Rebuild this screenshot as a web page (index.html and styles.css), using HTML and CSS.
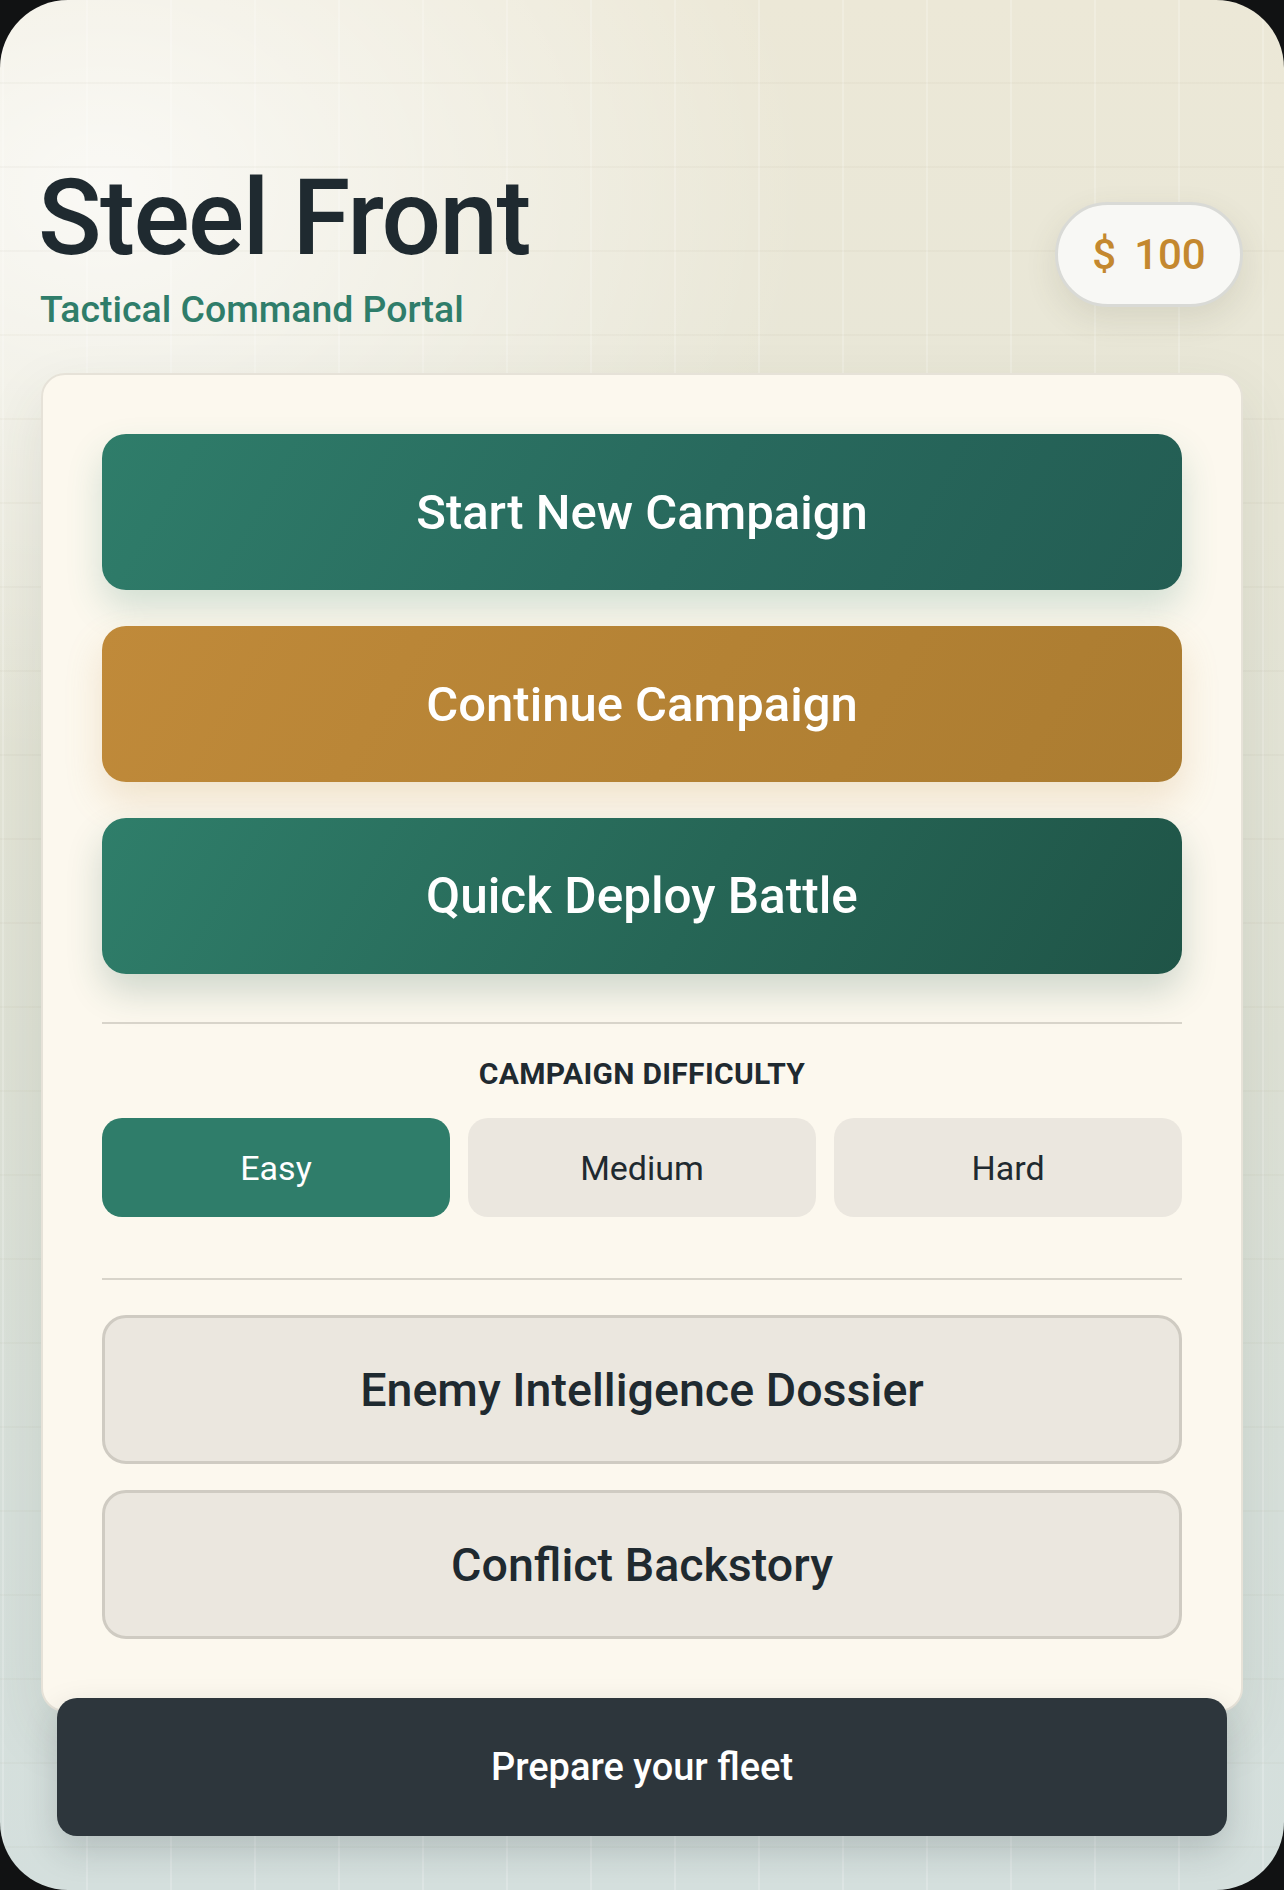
FILE: index.html
```html
<!DOCTYPE html>
<html lang="en">
<head>
<meta charset="utf-8">
<title>Steel Front</title>
<link rel="stylesheet" href="styles.css">
</head>
<body>
<div class="screen">
  <header class="top">
    <div class="brand">
      <h1 class="title">Steel Front</h1>
      <p class="subtitle">Tactical Command Portal</p>
    </div>
    <div class="badge"><span class="badge-sign">$</span><span class="badge-value">100</span></div>
  </header>

  <main class="card">
    <button class="btn btn-primary">Start New Campaign</button>
    <button class="btn btn-gold">Continue Campaign</button>
    <button class="btn btn-deep">Quick Deploy Battle</button>

    <div class="rule rule-first"></div>

    <section class="difficulty">
      <h2 class="label">CAMPAIGN DIFFICULTY</h2>
      <div class="segments">
        <button class="seg seg-on">Easy</button>
        <button class="seg">Medium</button>
        <button class="seg">Hard</button>
      </div>
    </section>

    <div class="rule rule-second"></div>

    <div class="links">
      <button class="outline">Enemy Intelligence Dossier</button>
      <button class="outline">Conflict Backstory</button>
    </div>
  </main>

  <div class="action-bar">Prepare your fleet</div>
</div>
</body>
</html>
```

FILE: styles.css
```css
* { box-sizing: border-box; }

html, body {
  margin: 0;
  padding: 0;
  background: #111213;
}

body {
  font-family: Roboto, "Liberation Sans", Arial, sans-serif;
  color: #1f2a30;
}

.screen {
  position: relative;
  width: 1284px;
  height: 1890px;
  border-radius: 68px;
  overflow: hidden;
  padding: 0 41px;
  background-color: #e4e4d6;
  background-image:
    linear-gradient(rgba(150, 140, 110, 0.05) 2px, transparent 2px),
    linear-gradient(90deg, rgba(255, 255, 255, 0.2) 2px, transparent 2px),
    radial-gradient(ellipse 55% 30% at 8% 10%, rgba(255, 255, 255, 0.75), rgba(255, 255, 255, 0) 100%),
    linear-gradient(180deg, #ece8d7 0%, #e7e6d7 28%, #dee1d5 55%, #d7e0db 80%, #d4dfdd 100%);
  background-size: 84px 84px, 84px 84px, 100% 100%, 100% 100%;
  background-position: 0 82px, 2px 0, 0 0, 0 0;
}

/* header */
.top {
  display: flex;
  justify-content: space-between;
  align-items: center;
  padding-top: 167px;
}

.title {
  margin: 0 0 0 -3px;
  font-size: 105px;
  line-height: 104px;
  font-weight: 500;
  letter-spacing: -0.015em;
  color: #1f2a30;
}

.subtitle {
  margin: 15px 0 0 -1px;
  font-size: 37.4px;
  line-height: 46px;
  font-weight: 500;
  color: #2f7d6a;
}

.badge {
  margin-top: 10px;
  width: 188px;
  height: 105px;
  border-radius: 53px;
  background: #f8f8f5;
  border: 3px solid #d9dad6;
  box-shadow: 0 12px 32px rgba(80, 80, 60, 0.12);
  display: flex;
  align-items: center;
  justify-content: center;
  gap: 18px;
  color: #c4882f;
  font-size: 42px;
  font-weight: 500;
}

/* card */
.card {
  margin-top: 41px;
  background: #fcf8ee;
  border: 2px solid #e6e2d8;
  border-radius: 24px;
  padding: 59px 59px 71px;
  box-shadow: 0 24px 60px rgba(60, 70, 50, 0.10);
  display: flex;
  flex-direction: column;
}

.btn {
  display: flex;
  align-items: center;
  justify-content: center;
  height: 156px;
  width: 100%;
  border: 0;
  border-radius: 24px;
  font-family: inherit;
  font-size: 49.5px;
  font-weight: 500;
  color: #ffffff;
}

.btn + .btn { margin-top: 36px; }

.btn-primary {
  font-size: 49px;
  background: linear-gradient(120deg, #2f7d6a 0%, #28695d 55%, #235d53 100%);
  box-shadow: 0 18px 36px rgba(47, 125, 106, 0.20);
}

.btn-gold {
  font-size: 49px;
  background: linear-gradient(120deg, #c08a3a 0%, #b48234 55%, #ab7c31 100%);
  box-shadow: 0 18px 36px rgba(200, 150, 80, 0.22);
}

.btn-deep {
  background: linear-gradient(120deg, #2f7e6a 0%, #266656 55%, #1f5447 100%);
  box-shadow: 0 18px 36px rgba(31, 84, 70, 0.20);
}

.rule {
  height: 2px;
  background: #d8d4ca;
}

.rule-first { margin-top: 48px; }
.rule-second { margin-top: 61px; }

.difficulty {
  padding-top: 33px;
}

.label {
  margin: 0;
  text-align: center;
  font-size: 30px;
  line-height: 34px;
  font-weight: 700;
  letter-spacing: 0.01em;
  color: #1f2a30;
}

.segments {
  margin-top: 27px;
  display: grid;
  grid-template-columns: repeat(3, 1fr);
  gap: 18px;
}

.seg {
  height: 99px;
  border: 0;
  border-radius: 20px;
  background: #ebe7df;
  font-family: inherit;
  font-size: 34px;
  font-weight: 400;
  color: #1f2a30;
}

.seg-on {
  background: #2f7d6a;
  color: #ffffff;
}

.links {
  margin-top: 35px;
  display: flex;
  flex-direction: column;
  gap: 26px;
}

.outline {
  height: 149px;
  border: 3px solid #cfcbc2;
  border-radius: 24px;
  background: #ebe7df;
  font-family: inherit;
  font-size: 46.6px;
  font-weight: 500;
  color: #1f2a30;
}

/* fixed bottom action */
.action-bar {
  position: absolute;
  left: 57px;
  right: 57px;
  bottom: 54px;
  height: 138px;
  border-radius: 20px;
  background: #2d363c;
  display: flex;
  align-items: center;
  justify-content: center;
  color: #ffffff;
  font-size: 38px;
  font-weight: 500;
  box-shadow: 0 14px 34px rgba(30, 40, 45, 0.18);
}
```
